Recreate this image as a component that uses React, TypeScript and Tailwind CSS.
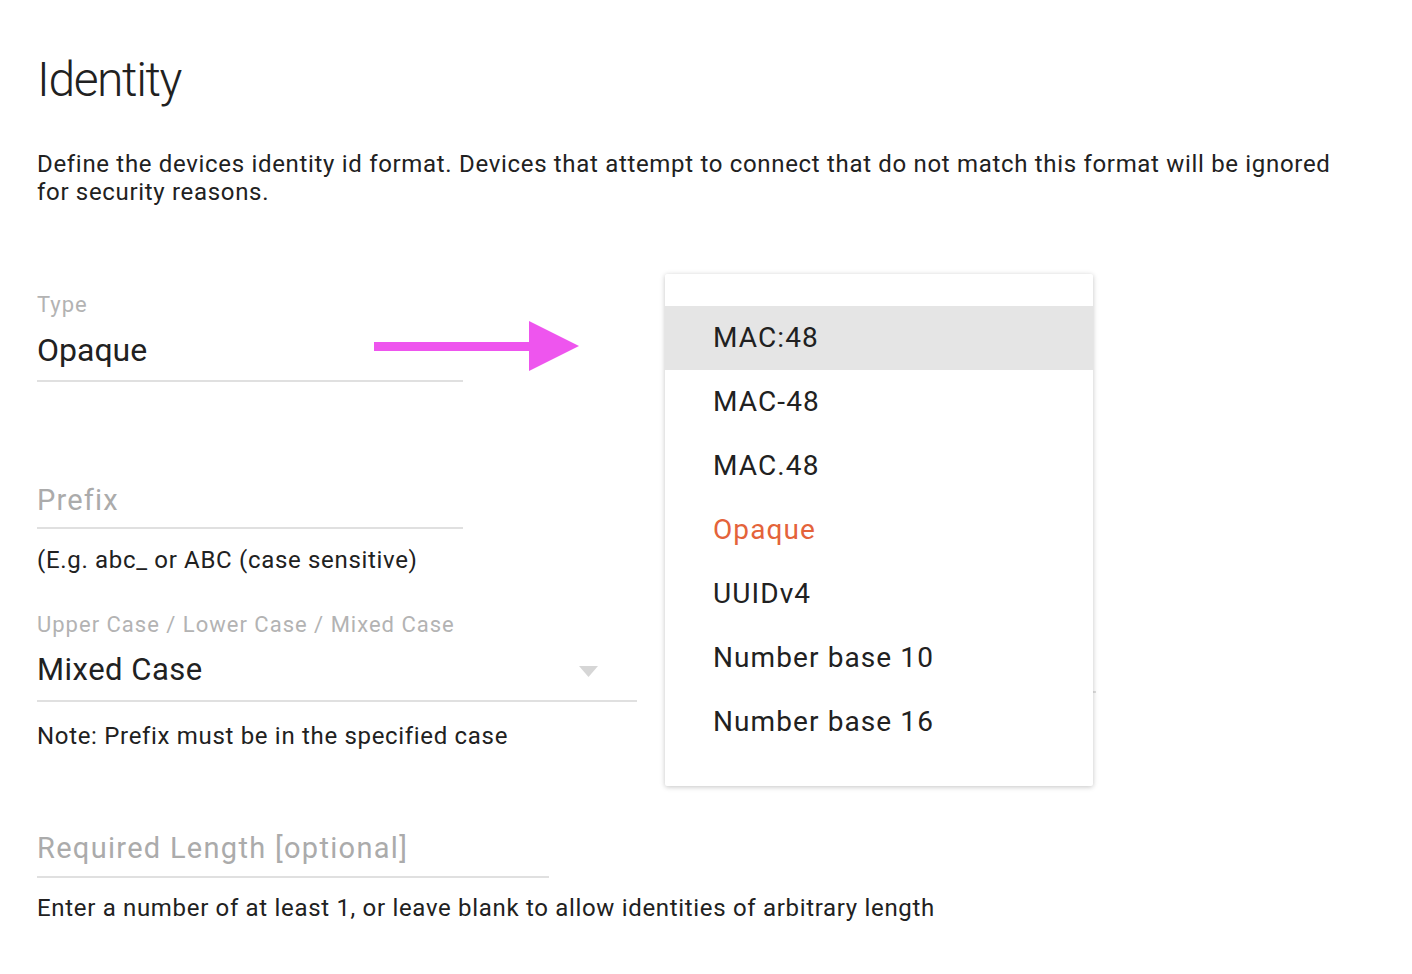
import React from 'react'

const options = ['MAC:48', 'MAC-48', 'MAC.48', 'Opaque', 'UUIDv4', 'Number base 10', 'Number base 16']

function Underline({ width }: { width: string }) {
  return <div className={`h-[2px] bg-[#e0e0e0] ${width}`} />
}

function Arrow() {
  return (
    <svg
      className="absolute left-[374px] top-[321px]"
      width="205"
      height="50"
      viewBox="0 0 205 50"
    >
      <rect x="0" y="21" width="157" height="9" fill="#ee55ee" />
      <polygon points="155,0 205,25 155,50" fill="#ee55ee" />
    </svg>
  )
}

function Menu() {
  return (
    <div className="absolute left-[665px] top-[274px] w-[428px] rounded-[2px] bg-white py-[32px] shadow-[0_1px_6px_rgba(0,0,0,0.12),0_1px_4px_rgba(0,0,0,0.12)]">
      {options.map((opt, i) => (
        <div
          key={opt}
          className={
            'flex h-[64px] items-center pl-[48px] text-[28px] tracking-[1.1px] ' +
            (i === 0 ? 'bg-[#e5e5e5] ' : '') +
            (opt === 'Opaque' ? 'text-[#e4633a]' : 'text-[#212121]')
          }
        >
          {opt}
        </div>
      ))}
    </div>
  )
}

export default function App() {
  return (
    <div className="relative min-h-screen bg-white px-[37px] font-['Roboto',sans-serif] text-[#212121]">
      <h1 className="pt-[52px] text-[48px] font-light leading-[56px] tracking-[-1.4px]">Identity</h1>
      <p className="mt-[42px] max-w-[1320px] text-[24px] leading-[28px] tracking-[0.68px]">
        Define the devices identity id format. Devices that attempt to connect that do not match this format will be
        ignored for security reasons.
      </p>

      <div className="mt-[86px] text-[22px] leading-[26px] tracking-[1px] text-[#b3b3b3]">Type</div>
      <div className="mt-[13px] text-[32px] leading-[38px]">Opaque</div>
      <div className="mt-[11px]">
        <Underline width="w-[426px]" />
      </div>

      <div className="mt-[101px] text-[29px] leading-[34px] tracking-[1.2px] text-[#ababab]">Prefix</div>
      <div className="mt-[10px]">
        <Underline width="w-[426px]" />
      </div>
      <div className="mt-[17px] text-[24px] leading-[28px] tracking-[0.68px]">(E.g. abc_ or ABC (case sensitive)</div>

      <div className="mt-[38px] text-[22px] leading-[26px] tracking-[1px] text-[#b3b3b3]">
        Upper Case / Lower Case / Mixed Case
      </div>
      <div className="mt-[14px] flex w-[600px] items-center justify-between text-[31px] leading-[36px] tracking-[0.5px]">
        <span>Mixed Case</span>
        <svg width="19" height="11" viewBox="0 0 19 11" className="mr-[39px] mt-[2px]">
          <polygon points="0,0 19,0 9.5,11" fill="#d6d6d6" />
        </svg>
      </div>
      <div className="mt-[12px]">
        <Underline width="w-[600px]" />
      </div>
      <div className="mt-[20px] text-[24px] leading-[28px] tracking-[0.68px]">
        Note: Prefix must be in the specified case
      </div>

      <div className="mt-[81px] text-[29px] leading-[34px] tracking-[1.3px] text-[#ababab]">
        Required Length [optional]
      </div>
      <div className="mt-[11px]">
        <Underline width="w-[512px]" />
      </div>
      <div className="mt-[16px] pb-[40px] text-[24px] leading-[28px] tracking-[0.68px]">
        Enter a number of at least 1, or leave blank to allow identities of arbitrary length
      </div>

      <div className="absolute left-[1080px] top-[691px] h-[2px] w-[16px] bg-[#e0e0e0]" />
      <Arrow />
      <Menu />
    </div>
  )
}
